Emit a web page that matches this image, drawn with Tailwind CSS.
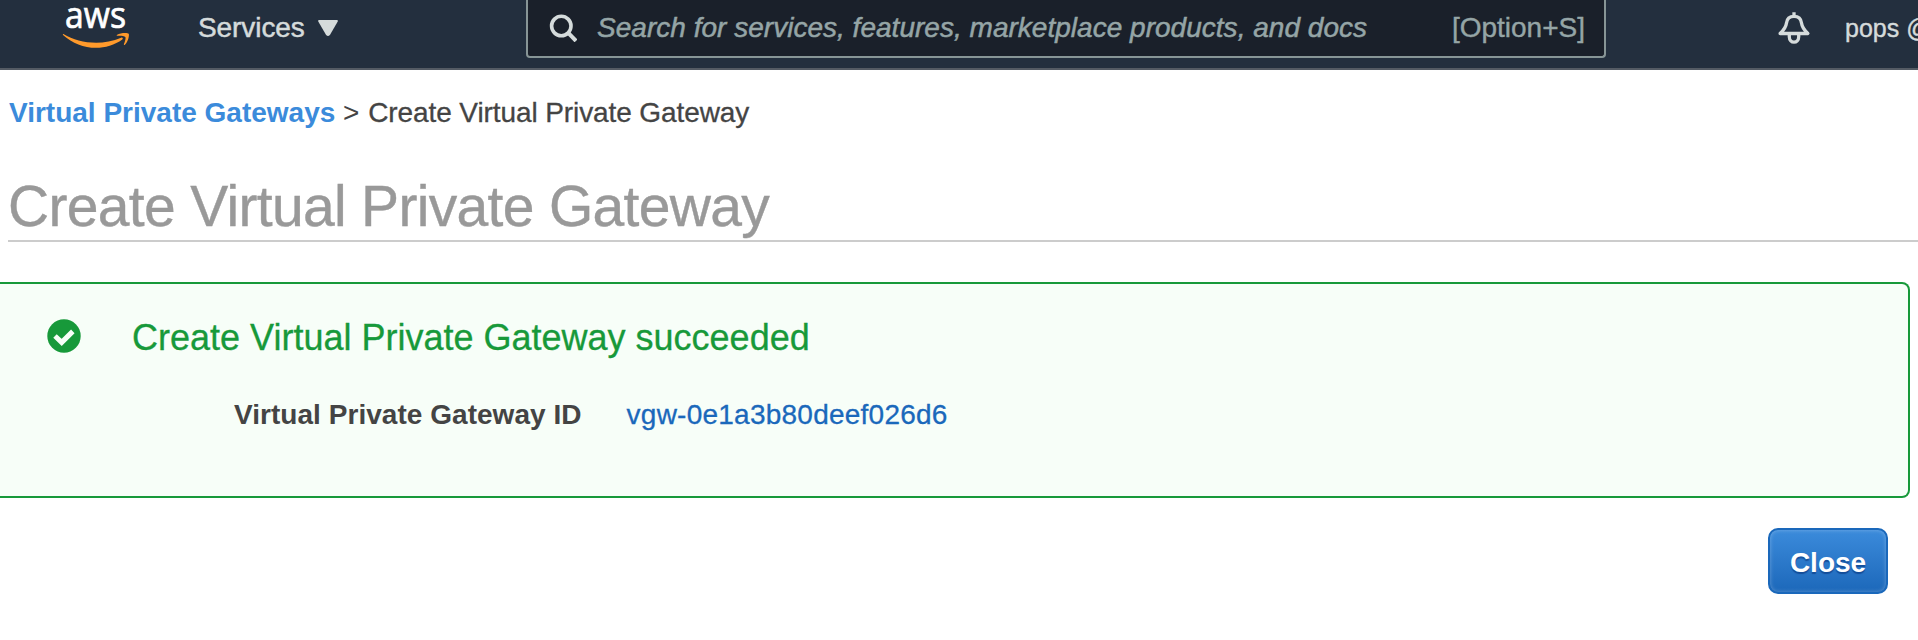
<!DOCTYPE html>
<html lang="en">
<head>
<meta charset="utf-8">
<title>Create Virtual Private Gateway</title>
<script src="https://cdn.jsdelivr.net/npm/@tailwindcss/browser@4"></script>
</head>
<body class="h-[640px] overflow-hidden bg-white font-['Liberation_Sans',Arial,sans-serif] text-[28px] text-[#444444]">
<header class="flex h-[70px] items-start overflow-hidden border-b-2 border-[#545b64] bg-[#232f3e] text-[#d5dbdb] whitespace-nowrap">
  <svg class="ml-[60px] h-14 w-[72px] shrink-0 overflow-visible" viewBox="60 0 72 56">
    <text x="65" y="27.800" font-family="Open Sans, Noto Sans, sans-serif" font-size="36" fill="#fff" stroke="#fff" stroke-width=".7" textLength="61" lengthAdjust="spacingAndGlyphs">aws</text>
    <path fill="#ff9a2b" d="M63.400 34.100c9.400 5.700 20.600 8.700 32.800 8.700 8 0 16.800-1.700 25-5.100 1.300-.5 2.300.8 1.100 1.700-7.300 5.400-17.400 8.400-26.200 8.400-12.400 0-23.900-4.700-32.800-12.600-.7-.7-.5-1.500.1-1.100z"/>
    <path fill="#ff9a2b" d="M117.400 35.800c-.8.100-.9-.6-.2-1.100 2.900-1.900 10.500-2.200 11.500-1 .9 1.200-.6 8.200-3.800 11-.6.500-1.300.2-1-.5.900-2 2.200-6.100 1.400-7.200-.8-1.200-5.400-1.400-7.900-1.200z"/>
  </svg>
  <div class="ml-[66px] flex h-14 items-center">
    <span class="w-[107px] tracking-[-0.08px] [-webkit-text-stroke:0.5px_#d5dbdb]">Services</span>
    <svg class="ml-[13px] h-5 w-5" viewBox="0 0 20 20"><path fill="#d5dbdb" d="M1.200 2h17.600q1.700 0 .8 1.700l-7.700 13.300q-1.900 2.200-3.800 0L.4 3.700Q-.5 2 1.200 2z"/></svg>
  </div>
  <div class="ml-[188px] flex h-[58px] w-[1080px] shrink-0 items-center rounded-b border-2 border-t-0 border-[#879596] bg-[#1a202a] pr-[19px] pl-[21px] text-[#95a5a6]">
    <svg class="h-7 w-7" viewBox="0 0 28 28" fill="none" stroke="#d5dbdb" stroke-width="3.600"><circle cx="12.300" cy="12" r="9.700"/><path d="M19 18.700l8 8.200" stroke-width="4"/></svg>
    <span class="ml-5 tracking-[0.02px] italic [-webkit-text-stroke:0.5px_#95a5a6]">Search for services, features, marketplace products, and docs</span>
    <span class="ml-auto [-webkit-text-stroke:0.4px_#95a5a6]">[Option+S]</span>
  </div>
  <svg class="mt-3 ml-[172px] h-8 w-8 shrink-0 overflow-visible" viewBox="0 0 32 32" fill="none" stroke="#d5dbdb" stroke-width="3.300" stroke-linejoin="round"><path d="M16 .2v4M2.100 21.500C6.200 17.700 8 15 8.500 11 9 6.600 11.800 4.400 16 4.400s7 2.200 7.500 6.600c.5 4 2.300 6.700 6.400 10.500z"/><path d="M11.300 22.500v2.200c0 7.200 9.400 7.200 9.400 0v-2.200"/></svg>
  <span class="ml-[35px] leading-[56px] text-[25px] [-webkit-text-stroke:0.4px_#d5dbdb]">pops @</span>
</header>
<main>
  <nav class="flex h-[84px] items-center pt-px pl-[9px] whitespace-pre"><a class="font-bold text-[#3b8bdb]">Virtual Private Gateways</a><span> &gt; </span><span class="ml-px tracking-[-0.1px] [-webkit-text-stroke:0.3px_#444444]">Create Virtual Private Gateway</span></nav>
  <h1 class="ml-2 h-[88px] border-b-2 border-[#cccccc] pt-[19px] text-[57px] leading-[67px] tracking-[-0.68px] text-[#999999] whitespace-nowrap [-webkit-text-stroke:0.4px_#999999]">Create Virtual Private Gateway</h1>
  <section class="mt-10 mr-2 h-[216px] rounded-r-lg border-2 border-l-0 border-[#17993a] bg-[#f7fef8] pt-8">
    <div class="flex h-[43px] items-center pl-[47px]">
      <svg class="-mt-[3px] h-[34px] w-[34px]" viewBox="0 0 34 34"><circle cx="17" cy="17" r="16.700" fill="#17993a"/><path d="M8 17L14.700 23.400 25.800 12.400" fill="none" stroke="#f7fef8" stroke-width="5" stroke-linejoin="miter"/></svg>
      <h2 class="ml-[51px] text-[36px] text-[#17993a] [-webkit-text-stroke:0.3px_#17993a]">Create Virtual Private Gateway succeeded</h2>
    </div>
    <div class="mt-9 flex h-[39px] items-center pl-[234px]">
      <span class="font-bold tracking-[0.04px]">Virtual Private Gateway ID</span>
      <a class="ml-[45px] tracking-[0.24px] text-[#1a68bb] [-webkit-text-stroke:0.3px_#1a68bb]">vgw-0e1a3b80deef026d6</a>
    </div>
  </section>
  <div class="mt-[30px] flex justify-end pr-[30px]">
    <button class="h-[66px] w-[120px] rounded-[10px] border-2 border-[#1a68bb] bg-linear-to-b from-[#3b8bdb] to-[#1c68ba] pt-[3px] font-bold text-white shadow-[inset_0_0_4px_rgba(255,255,255,0.3)] text-shadow-[0_2px_1px_rgba(0,40,110,0.5)]">Close</button>
  </div>
</main>
</body>
</html>
